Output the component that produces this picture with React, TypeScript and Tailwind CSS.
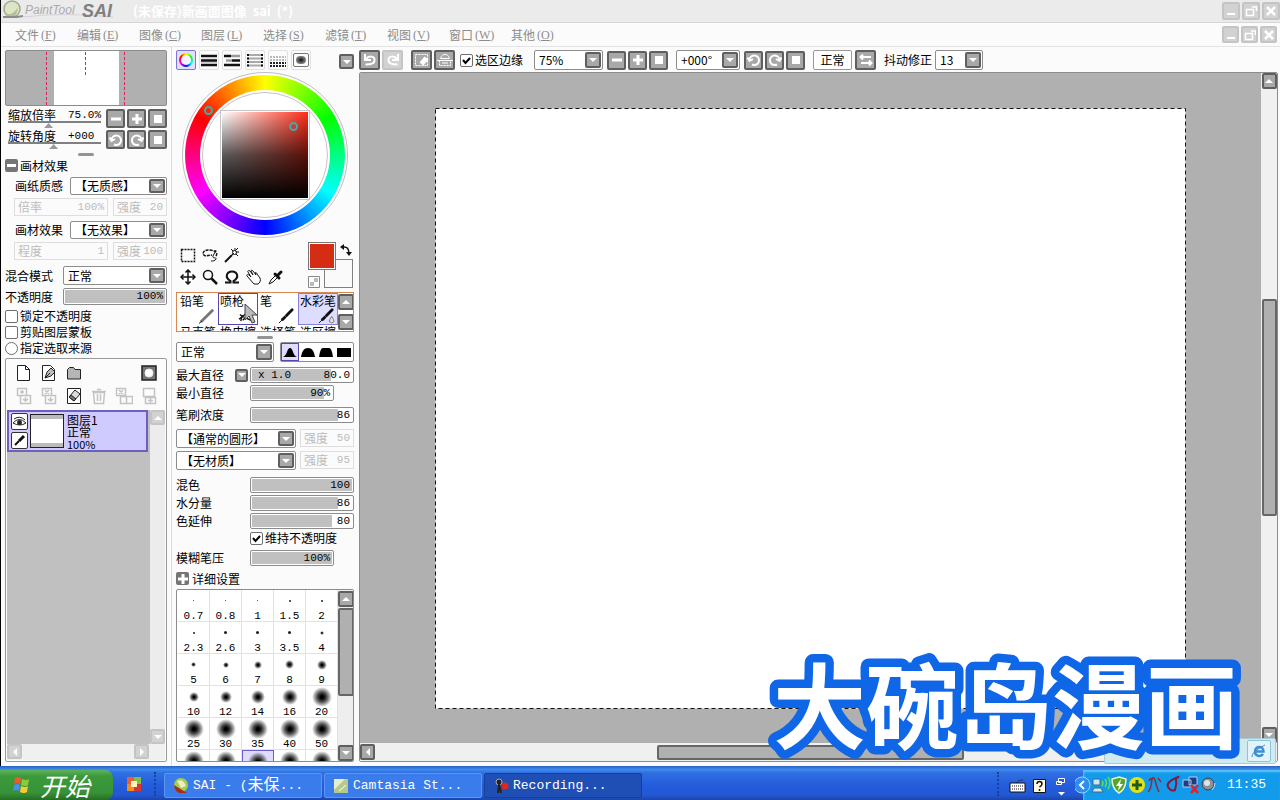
import { useState } from "react";
import type { ReactNode } from "react";
import clsx from "clsx";

const CJK = "font-['Noto_Sans_CJK_SC',sans-serif]";

const MENUS = [
  ["文件", "F"],
  ["编辑", "E"],
  ["图像", "C"],
  ["图层", "L"],
  ["选择", "S"],
  ["滤镜", "T"],
  ["视图", "V"],
  ["窗口", "W"],
  ["其他", "O"],
];

// label, diameter of the preview dot
const SIZES: [string, number][] = [
  ["0.7", 1], ["0.8", 1], ["1", 1], ["1.5", 2], ["2", 2],
  ["2.3", 2], ["2.6", 3], ["3", 3], ["3.5", 3], ["4", 4],
  ["5", 5], ["6", 6], ["7", 8], ["8", 9], ["9", 10],
  ["10", 10], ["12", 12], ["14", 14], ["16", 16], ["20", 20],
  ["25", 20], ["30", 20], ["35", 20], ["40", 20], ["50", 20],
  ["60", 20], ["70", 20], ["80", 20], ["100", 20], ["120", 20],
];

type IconName =
  | "minus" | "plus" | "square" | "ccw" | "cw" | "undo" | "redo"
  | "deselect" | "invert" | "swap" | "up" | "down" | "left" | "right"
  | "min" | "max" | "close";

function Glyph({ name }: { name: IconName }) {
  return (
    <svg viewBox="0 0 16 16" className="h-4 w-4 shrink-0" fill="none" stroke="#fff" strokeWidth="2">
      {name === "minus" && <path d="M3 8h10" strokeWidth="3" />}
      {name === "plus" && <path d="M3 8h10M8 3v10" strokeWidth="3" />}
      {name === "square" && <path d="M5 5h6v6H5z" fill="#fff" />}
      {name === "ccw" && <path d="M6 12.500a4.800 4.800 0 1 0-2.500-5M1.500 5.500l2 3.500L7 7" />}
      {name === "cw" && <path d="M10 12.500a4.800 4.800 0 1 1 2.500-5M14.500 5.500l-2 3.500L9 7" />}
      {name === "undo" && <path d="M3 2v6h6M3.500 7.500C7 3 13 4 12.500 8.500c0 3-2.500 4-9 4" />}
      {name === "redo" && <path d="M13 2v6H7M12.500 7.500C9 3 3 4 3.500 8.500c0 3 2.500 4 9 4" />}
      {name === "deselect" && (
        <>
          <path d="M1.500 2.500h12v11h-12z" strokeWidth="1" strokeDasharray="2 1" />
          <path d="M5.500 10.500l5-6 4 3-5 6z" fill="#fff" strokeWidth="0" />
        </>
      )}
      {name === "invert" && (
        <>
          <path d="M2.500 8.500h11v5h-11z" strokeWidth="1" strokeDasharray="2 1" />
          <path d="M3.500 6.500C5 1 11 1 12.500 6.500zM0 8.500h16M5 11h6" strokeWidth="1" />
        </>
      )}
      {name === "swap" && <path d="M2 5h11M3 11h11M5 2.500L2.500 5 5 7.500M11 8.500l2.500 2.500-2.500 2.500" />}
      {name === "up" && <path d="M4 10l4-4 4 4z" fill="#fff" strokeWidth="0" />}
      {name === "down" && <path d="M4 6l4 4 4-4z" fill="#fff" strokeWidth="0" />}
      {name === "left" && <path d="M10 4L6 8l4 4z" fill="#fff" strokeWidth="0" />}
      {name === "right" && <path d="M6 4l4 4-4 4z" fill="#fff" strokeWidth="0" />}
      {name === "min" && <path d="M4 11h8" />}
      {name === "max" && <path d="M3.500 6.500h7v6h-7zM9 4h4.500v4" strokeWidth="1.500" />}
      {name === "close" && <path d="M4 4l8 8M12 4l-8 8" strokeWidth="2.500" />}
    </svg>
  );
}

function Btn({ name, label, className, faded }: { name: IconName; label: string; className?: string; faded?: boolean }) {
  return (
    <button
      type="button"
      aria-label={label}
      className={clsx(
        "flex shrink-0 items-center justify-center overflow-hidden rounded-xs border-2",
        faded ? "border-[#c4c4c4] bg-[#d2d2d2]" : "border-[#5f5f5f] bg-[#a8a8a8]",
        className ?? "h-[19px] w-[19px]"
      )}
    >
      <Glyph name={name} />
    </button>
  );
}

function Drop({ label, value, className }: { label: string; value: string; className: string }) {
  return (
    <div className={clsx("relative shrink-0 rounded-xs border border-[#8c8c8c] bg-white", className)}>
      <select aria-label={label} className="h-full w-full appearance-none bg-transparent pl-1 leading-4 outline-none">
        <option>{value}</option>
      </select>
      <span className="pointer-events-none absolute inset-y-px right-px flex w-4 items-center justify-center overflow-hidden rounded-xs border-2 border-[#5f5f5f] bg-[#a8a8a8]">
        <Glyph name="down" />
      </span>
    </div>
  );
}

function Bar({ label, value, fill, className, prefix }: { label: string; value: string; fill: number; className: string; prefix?: string }) {
  const [pos, setPos] = useState(fill);
  return (
    <div className={clsx("relative shrink-0 rounded-xs border border-[#8c8c8c] bg-white p-px", className)}>
      <input
        type="range"
        aria-label={label}
        value={pos}
        onChange={(e) => setPos(Number(e.target.value))}
        className="block h-full w-full appearance-none [&::-webkit-slider-thumb]:opacity-0"
        style={{ background: `linear-gradient(to right, #c0c0c0 ${pos}%, #fff ${pos}%)` }}
      />
      <span className="pointer-events-none absolute inset-0 flex items-center justify-between px-[3px] font-['Liberation_Mono',monospace] text-[11px]">
        <span className="pl-1 whitespace-pre">{prefix}</span>
        <span>{value}</span>
      </span>
    </div>
  );
}

function Off({ label, value, className }: { label: string; value: string; className: string }) {
  return (
    <div className={clsx("flex h-[18px] shrink-0 items-center justify-between border border-[#dedede] px-[3px] text-[#bcbcbc]", className)}>
      <span>{label}</span>
      <span className="font-['Liberation_Mono',monospace] text-[11px]">{value}</span>
    </div>
  );
}

function Grip() {
  return (
    <div className="mt-0.5 flex h-[7px] items-center justify-center">
      <span className="h-[3px] w-4 rounded-xs bg-[#949494]" />
    </div>
  );
}

function Tick({ label, checked, type = "checkbox" }: { label: string; checked?: boolean; type?: "checkbox" | "radio" }) {
  const [on, setOn] = useState(!!checked);
  return (
    <label className="flex h-4 items-center gap-0.5">
      <span className="relative flex h-[13px] w-[13px]">
        <input
          type={type}
          checked={on}
          onChange={() => setOn(!on)}
          className={clsx("h-[13px] w-[13px] appearance-none border border-[#6f6f6f] bg-white", type === "radio" ? "rounded-full" : "rounded-xs")}
        />
        {on && (
          <svg viewBox="0 0 13 13" className="pointer-events-none absolute inset-0" fill="none" stroke="#000" strokeWidth="2">
            <path d="M3 6l2.500 3L10 4" />
          </svg>
        )}
      </span>
      {label}
    </label>
  );
}

function NavSlider({ label, value, pos }: { label: string; value: string; pos: number }) {
  return (
    <label className="flex h-[19px] w-[93px] flex-col">
      <span className="flex h-3 items-center justify-between leading-3">
        <span>{label}</span>
        <span className="font-['Liberation_Mono',monospace] text-[11px] whitespace-pre">{value}</span>
      </span>
      <input
        type="range"
        defaultValue={pos}
        className="block h-[7px] w-full appearance-none border-t-2 border-[#808080] [&::-webkit-slider-thumb]:h-[5px] [&::-webkit-slider-thumb]:w-[9px] [&::-webkit-slider-thumb]:appearance-none [&::-webkit-slider-thumb]:bg-[#9a9a9a] [&::-webkit-slider-thumb]:[clip-path:polygon(50%_0,100%_100%,0_100%)]"
      />
    </label>
  );
}

function TitleBar() {
  return (
    <header className="flex h-[23px] items-center border-b border-[#d6d6d6] bg-[#ebebec]">
      <svg viewBox="0 0 128 22" className="h-[22px] w-32 shrink-0">
        <circle cx="11" cy="9" r="8" fill="#dce5c4" stroke="#a3a88f" strokeWidth="1.500" />
        <path d="M2 11q8 8 15-4-1 11-9 11z" fill="#b3bd96" />
        <path d="M2 17h14l6-1" stroke="#8c8c8c" strokeWidth="2" fill="none" />
        <path d="M22 17q40-5 90 0" stroke="#d9cfe0" fill="none" />
        <text x="24" y="14" fontSize="12" fontStyle="italic" fill="#aaa" fontFamily="Liberation Sans">PaintTool</text>
        <text x="81" y="17" fontSize="18" fontWeight="bold" fontStyle="italic" fill="#808080" fontFamily="Liberation Sans">SAI</text>
      </svg>
      <h1 className="flex-1 pl-1 text-[13px] font-bold whitespace-pre text-white">(未保存)新画面图像  sai  (*)</h1>
      <div className="flex gap-0.5">
        <Btn faded name="min" label="最小化" className="h-[18px] w-[18px]" />
        <Btn faded name="max" label="还原" className="h-[18px] w-[18px]" />
        <Btn faded name="close" label="关闭" className="h-[18px] w-[18px]" />
      </div>
    </header>
  );
}

function MenuBar() {
  return (
    <nav className="flex h-6 items-center border-b border-[#e4e4e4] bg-[#fbfbfb] pl-3.5 text-[#8c8c8c]">
      {MENUS.map(([name, key]) => (
        <button key={key} type="button" className="flex w-[62px] items-center gap-0.5">
          {name}
          <span className="font-['Liberation_Serif',serif]">
            (<u>{key}</u>)
          </span>
        </button>
      ))}
      <div className="ml-auto flex gap-0.5 pr-[3px]">
        <Btn faded name="min" label="最小化图像" className="h-[17px] w-[17px]" />
        <Btn faded name="max" label="还原图像" className="h-[17px] w-[17px]" />
        <Btn faded name="close" label="关闭图像" className="h-[17px] w-[17px]" />
      </div>
    </nav>
  );
}

function LayerIcon({ label, dim, children }: { label: string; dim?: boolean; children: ReactNode }) {
  return (
    <button type="button" aria-label={label} className={clsx("h-[18px] w-[18px]", dim && "opacity-25")}>
      <svg viewBox="0 0 18 18" fill="#fff" stroke="#222">
        {children}
      </svg>
    </button>
  );
}

function LayerPanel() {
  return (
    <section className="mt-0.5 flex min-h-0 flex-1 flex-col rounded-xs border border-[#999] p-px">
      <div className="mt-1 grid h-[46px] grid-cols-6 content-start justify-items-center gap-y-[5px] px-1">
        <LayerIcon label="新建图层">
          <path d="M2.500 1.500h8l4 4v11h-12zM10.500 1.500v4h4" />
        </LayerIcon>
        <LayerIcon label="新建钢笔图层">
          <path d="M2.500 1.500h8l4 4v11h-12z" />
          <path d="M5 14l2-6 4-4 4 4-4 4zM5 14l5-5" fill="#bbb" />
        </LayerIcon>
        <LayerIcon label="新建图层组">
          <path d="M2.500 5.500l2-2h4l1.500 2h5.500v9.500h-13z" fill="#b5b5b5" />
        </LayerIcon>
        <span />
        <span />
        <LayerIcon label="图层蒙版">
          <path d="M2 2h14v14H2z" fill="#777" strokeWidth="1.500" />
          <circle cx="9" cy="9" r="4" stroke="#eee" />
        </LayerIcon>
        <LayerIcon label="向下转写" dim>
          <path d="M2.500 1.500h9v7h-9zM5.500 8.500h10v8h-10zM7 3v4M5 5h4M10.500 10v4M8 12l2.500 2 2.500-2" strokeWidth="1.500" />
        </LayerIcon>
        <LayerIcon label="向下合并" dim>
          <path d="M2.500 1.500h9v7h-9zM5.500 8.500h10v8h-10zM5 3l4 4M9 3L5 7M10.500 10v4M8 12l2.500 2 2.500-2" strokeWidth="1.500" />
        </LayerIcon>
        <LayerIcon label="清除图层">
          <path d="M2.500 1.500h13v15h-13z" />
          <path d="M4 10l6-7 5 4-6 7z" fill="#ddd" />
          <path d="M6 8l5 4-2 2-5-4z" fill="#777" />
        </LayerIcon>
        <LayerIcon label="删除图层" dim>
          <path d="M3.500 5.500h11l-1 11h-9zM2 4.500h14M7 2.500h4M7.500 7v7M10.500 7v7" strokeWidth="1.500" />
        </LayerIcon>
        <LayerIcon label="应用蒙版" dim>
          <path d="M1.500 1.500h9v7h-9zM5.500 9.500h6v7h-6zM11.500 9.500h6v7h-6zM4 3l4 4M8 3L4 7" strokeWidth="1.500" />
        </LayerIcon>
        <LayerIcon label="选取图层" dim>
          <path d="M3.500 1.500h11v8h-11zM5.500 10.500h10v6h-10zM10.500 11v5M8 13.500h5" strokeWidth="1.500" />
        </LayerIcon>
      </div>
      <div className="flex min-h-0 flex-1 bg-[#c0c0c0]">
        <div className="flex-1">
          <div className="flex h-[42px] items-center gap-0.5 border-2 border-[#6c5fc0] bg-[#cfcbff] pl-0.5">
            <div className="flex flex-col gap-0.5">
              <button type="button" aria-label="显示图层" className="h-[17px] w-[17px] rounded-xs border border-[#333] bg-white">
                <svg viewBox="0 0 15 15" fill="none" stroke="#222">
                  <path d="M1 9q6-7 13 0-6 4-13 0M2 5q6-4 11 1" />
                  <circle cx="7.500" cy="8.500" r="2" fill="#222" />
                </svg>
              </button>
              <button type="button" aria-label="编辑图层" className="h-[17px] w-[17px] rounded-xs border border-[#333] bg-white">
                <svg viewBox="0 0 15 15" stroke="#111">
                  <path d="M3 12l4-4" strokeWidth="2" />
                  <path d="M7 8l5-5" strokeWidth="3" />
                </svg>
              </button>
            </div>
            <div className="h-[34px] w-[34px] border border-[#222] bg-[linear-gradient(#bbb_4px,#fff_4px_28px,#bbb_28px)]" />
            <div className="pl-px">
              <p className="leading-[13px]">图层1</p>
              <p className="leading-3">正常</p>
              <p className="text-[11px] leading-3">100%</p>
            </div>
          </div>
        </div>
        <div className="ml-0.5 flex w-[15px] flex-col justify-between bg-[#ececec]">
          <Btn faded name="up" label="图层上滚" className="h-[15px] w-[15px]" />
          <Btn faded name="down" label="图层下滚" className="h-[15px] w-[15px]" />
        </div>
      </div>
      <div className="flex h-4 justify-between bg-[#f0f0f0] pr-4">
        <Btn faded name="left" label="图层左滚" className="h-[15px] w-[15px]" />
        <Btn faded name="right" label="图层右滚" className="h-[15px] w-[15px]" />
      </div>
    </section>
  );
}

function LeftPanel() {
  return (
    <aside className="flex w-[171px] shrink-0 flex-col border-r border-[#dcdcdc] pt-[3px] pr-1 pb-1 pl-1">
      <div className="relative flex h-14 justify-center rounded-xs border border-[#8c8c8c] bg-[#b0b0b0]">
        <div className="h-full w-[65px] bg-white" />
        <svg viewBox="0 0 160 54" className="absolute inset-0" fill="none" stroke="#e0205c" strokeDasharray="3 2">
          <path d="M40.500 1v53M118.500 1v53M79.500 1v25" />
        </svg>
      </div>
      <div className="mt-[3px] flex justify-between pl-[3px]">
        <NavSlider label="缩放倍率" value="75.0%" pos={43} />
        <div className="flex gap-0.5">
          <Btn name="minus" label="缩小视图" />
          <Btn name="plus" label="放大视图" />
          <Btn name="square" label="重置缩放" />
        </div>
      </div>
      <div className="mt-0.5 flex justify-between pl-[3px]">
        <NavSlider label="旋转角度" value="+000 " pos={49} />
        <div className="flex gap-0.5">
          <Btn name="ccw" label="视图左转" />
          <Btn name="cw" label="视图右转" />
          <Btn name="square" label="重置角度" />
        </div>
      </div>
      <Grip />
      <div className="flex h-[15px] items-center gap-0.5">
        <button type="button" aria-label="收起" className="flex h-[13px] w-[13px] items-center justify-center rounded-xs bg-[#757575]">
          <span className="h-[3px] w-[9px] bg-white" />
        </button>
        画材效果
      </div>
      <div className="mt-1 flex items-center justify-between pl-2.5">
        画纸质感
        <Drop label="画纸质感" value="【无质感】" className="h-[18px] w-[97px]" />
      </div>
      <div className="mt-[3px] flex justify-between pl-[9px]">
        <Off label="倍率" value="100%" className="w-[94px]" />
        <Off label="强度" value="20" className="w-[54px]" />
      </div>
      <div className="mt-[5px] flex items-center justify-between pl-2.5">
        画材效果
        <Drop label="画材效果" value="【无效果】" className="h-[18px] w-[97px]" />
      </div>
      <div className="mt-[3px] flex justify-between pl-[9px]">
        <Off label="程度" value="1" className="w-[94px]" />
        <Off label="强度" value="100" className="w-[54px]" />
      </div>
      <div className="mt-1.5 flex items-center justify-between">
        混合模式
        <Drop label="混合模式" value="正常" className="h-[19px] w-[104px]" />
      </div>
      <div className="mt-[3px] flex items-center justify-between">
        不透明度
        <Bar label="不透明度" value="100%" fill={100} className="h-[17px] w-[104px]" />
      </div>
      <div className="mt-[3px]">
        <Tick label="锁定不透明度" />
        <Tick label="剪贴图层蒙板" />
        <Tick label="指定选取来源" type="radio" />
      </div>
      <LayerPanel />
    </aside>
  );
}

function ColorTabs() {
  const box = "flex h-5 w-5 items-center justify-center rounded-xs border border-[#e0e0e0] p-px";
  return (
    <div className="flex h-5 items-start gap-[3px]">
      <button type="button" aria-label="色轮" className="flex h-5 w-5 items-center justify-center rounded-xs border border-[#7a74dd] bg-[#e2e0ff]">
        <span className="flex h-3.5 w-3.5 items-center justify-center rounded-full bg-[conic-gradient(#ff0,#0f0,#0ff,#00f,#f0f,#f00,#ff0)]">
          <span className="h-2.5 w-2.5 rounded-full bg-[#f4f3ff]" />
        </span>
      </button>
      <button type="button" aria-label="RGB滑块" className={box}>
        <svg viewBox="0 0 16 16" strokeWidth="2.500">
          <path d="M0 4h16M0 8.500h16M0 13h16" stroke="#111" />
          <path d="M0 6h16M0 10.500h16" stroke="#ccc" strokeWidth="1" />
        </svg>
      </button>
      <button type="button" aria-label="HSV滑块" className={box}>
        <svg viewBox="0 0 16 16" strokeWidth="2.500">
          <path d="M0 4h7M8 8.500h8M0 13h16" stroke="#111" />
          <path d="M7 4h9M2 8.500h6" stroke="#999" />
        </svg>
      </button>
      <button type="button" aria-label="中间色条" className={box}>
        <svg viewBox="0 0 16 16" strokeWidth="2">
          <path d="M0 3h16M0 6.500h16M0 10h16M0 13.500h16" stroke="#aaa" />
          <path d="M0 3h2M14 3h2M0 6.500h2M14 6.500h2M0 10h2M14 10h2M0 13.500h2M14 13.500h2" stroke="#111" />
        </svg>
      </button>
      <button type="button" aria-label="自定义色板" className={box}>
        <svg viewBox="0 0 16 16" strokeWidth="2" strokeDasharray="2 1">
          <path d="M0 5h16M0 8h16" stroke="#bbb" />
          <path d="M0 11h16M0 14h16" stroke="#222" />
        </svg>
      </button>
      <button type="button" aria-label="调色盘" className={box}>
        <span className="flex h-3.5 w-4 shrink-0 items-center justify-center rounded-xs border border-[#777]">
          <span className="h-2 w-2.5 rounded-full bg-[radial-gradient(#111,#bbb)]" />
        </span>
      </button>
      <Btn name="down" label="色彩选项" className="mt-1 ml-auto h-[15px] w-[15px]" />
    </div>
  );
}

function ColorWheel() {
  return (
    <div className="relative mx-auto mt-0.5 flex h-[166px] w-[166px] items-center justify-center rounded-full border border-[#c2bcc2] bg-white">
      <div className="flex h-40 w-40 items-center justify-center rounded-full bg-[conic-gradient(#ff0,#0f0,#0ff,#00f,#f0f,#f00,#ff0)]">
        <div className="flex h-[130px] w-[130px] items-center justify-center rounded-full bg-white">
          <div className="flex h-[126px] w-[126px] items-center justify-center rounded-full border border-[#c8c2c8]">
            <div className="h-[90px] w-[90px] shrink-0 border border-[#c8c2c8] bg-white p-px">
              <div className="h-full w-full bg-[linear-gradient(to_top,#000,#000000a6_50%,transparent),linear-gradient(to_right,#fff,#ff2d18)]" />
            </div>
          </div>
        </div>
      </div>
      <span className="absolute top-[33px] left-[21px] h-[9px] w-[9px] rounded-full border-2 border-[#3fa9ab]" />
      <span className="absolute top-[49px] left-[106px] h-[9px] w-[9px] rounded-full border-2 border-[#3fa9ab]" />
    </div>
  );
}

function Tool({ label, children }: { label: string; children: ReactNode }) {
  return (
    <button type="button" aria-label={label} className="h-[22px] w-[22px] p-[3px]">
      <svg viewBox="0 0 16 16" fill="none" stroke="#111">
        {children}
      </svg>
    </button>
  );
}

function ToolBox() {
  return (
    <div className="mt-1.5 flex justify-between">
      <div className="grid h-11 grid-cols-5 pl-px">
        <Tool label="矩形选择">
          <path d="M1.500 2.500h13v12h-13z" strokeWidth="1.500" strokeDasharray="2 1" />
        </Tool>
        <Tool label="套索">
          <path d="M14 9c3-5-4-6-8-6-5 0-7 5-2 6l6-1" strokeWidth="1.500" strokeDasharray="3 1" />
          <path d="M14 3l-3 6c-1 3 4 1 3 3s-3 2-5 2" />
        </Tool>
        <Tool label="魔棒">
          <path d="M1 15l7-7" strokeWidth="2" />
          <path d="M8 8l2-2M11 1v3M15 5h-3M7 2l2 2M14 9l-2-2M14 1l-2 2" />
          <circle cx="10.500" cy="5.500" r="2" />
        </Tool>
        <span />
        <span />
        <Tool label="移动">
          <path d="M8 1v14M1 8h14" strokeWidth="1.500" />
          <path d="M5.500 3.500L8 1l2.500 2.500M5.500 12.500L8 15l2.500-2.500M3.500 5.500L1 8l2.500 2.500M12.500 5.500L15 8l-2.500 2.500" strokeWidth="1.500" />
        </Tool>
        <Tool label="缩放">
          <circle cx="6" cy="6" r="4.500" strokeWidth="1.500" />
          <path d="M9.500 9.500L15 15" strokeWidth="2.500" />
        </Tool>
        <Tool label="旋转">
          <path d="M1 13.500h5.500v-1.500C0 8 3 2.500 8 2.500s8 5.500 1.500 9.500v1.500H15" strokeWidth="2" />
        </Tool>
        <Tool label="抓手">
          <path d="M8 15L1 7c-1-1 1-2 2-1l2 2-3-5c-1-1 1-2 2-1l3 4-2-4c0-1 1-1 2 0l3 4-1-2c1-1 2 0 2 1l3 4c1 2 0 5-2 6z" fill="#fff" />
        </Tool>
        <Tool label="吸管">
          <path d="M1 15l2-4 5-5 2 2-5 5z" fill="#fff" />
          <path d="M7 5l4 4M9 7l4-4" strokeWidth="3" strokeLinecap="round" />
        </Tool>
      </div>
      <div className="relative -mt-0.5 h-[46px] w-[46px]">
        <button type="button" aria-label="背景色" className="absolute right-px bottom-0 h-[29px] w-[29px] border border-[#808080] bg-[#fafafa]" />
        <button type="button" aria-label="前景色" className="absolute top-0 left-0 h-7 w-7 border border-[#777] bg-[#d62c14] outline outline-white -outline-offset-2" />
        <svg viewBox="0 0 12 12" className="absolute top-0.5 right-0.5 h-3 w-3" fill="none" stroke="#111" strokeWidth="1.500">
          <path d="M3 3q6-1 6 7" />
          <path d="M4 0v6L0 3zM6 8h6l-3 4z" fill="#111" strokeWidth="0" />
        </svg>
        <svg viewBox="0 0 12 12" className="absolute bottom-0 left-0 h-3 w-3">
          <path d="M.5.500h11v11H.5z" fill="#fff" stroke="#888" />
          <path d="M2 6h4v4H2zM6 2h4v4H6z" fill="#bbb" />
        </svg>
      </div>
    </div>
  );
}

const BRUSHES = ["铅笔", "喷枪", "笔", "水彩笔"];
const MORE_BRUSHES = ["马克笔", "橡皮擦", "选择笔", "选区擦"];

function BrushList() {
  return (
    <div className="relative mt-1 flex h-10 justify-between overflow-hidden border border-[#d98752] bg-white pr-px">
      <div className="grid grid-cols-[repeat(4,40px)] grid-rows-[32px_20px] pl-px">
        {BRUSHES.map((name, i) => (
          <button
            key={name}
            type="button"
            className={clsx(
              "relative flex items-start border px-px text-left leading-[14px] whitespace-nowrap",
              i === 1 && "border-[#5646b0]",
              i === 3 && "border-[#8880dd] bg-[#dedcff]",
              i % 2 === 0 && "border-transparent"
            )}
          >
            {name}
            <svg viewBox="0 0 18 18" className="absolute right-0.5 bottom-0 h-[17px] w-[17px]" fill="none" stroke="#111">
              {i === 0 && <path d="M3 16L16 3" strokeWidth="3" stroke="#777" />}
              {i === 0 && <path d="M1 17.500l3-2.500" />}
              {i === 1 && <path d="M1 13l10-8M2 8l4 3M5 14l5-5M9 12l5 2M3 15l1-5" strokeWidth="1.500" />}
              {i >= 2 && <path d="M1 17l4-4" />}
              {i >= 2 && <path d="M4 14l4-4" strokeWidth="3" />}
              {i >= 2 && <path d="M9 9l6-6" strokeWidth="3" strokeLinecap="round" />}
              {i === 3 && <path d="M14.500 10q-3 4-2.500 5.500 2.500 3 5 0 0-2-2.500-5.500z" fill="#ddd" stroke="#777" />}
            </svg>
          </button>
        ))}
        {MORE_BRUSHES.map((name) => (
          <button key={name} type="button" className="flex px-0.5 leading-[14px] whitespace-nowrap">
            {name}
          </button>
        ))}
      </div>
      <div className="flex flex-col justify-between py-px">
        <Btn name="up" label="笔刷上滚" className="h-4 w-4" />
        <Btn name="down" label="笔刷下滚" className="h-4 w-4" />
      </div>
      {/* mouse pointer */}
      <svg viewBox="0 0 14 22" className="pointer-events-none absolute top-2.5 left-[67px] h-[22px] w-3.5" fill="#bbb" stroke="#444">
        <path d="M1 1v16l4-4 3 7 3-1-3-7h5z" />
      </svg>
    </div>
  );
}

function EdgeShapes() {
  const paths = ["M1 13c4-1 4-9 7-9s3 8 7 9z", "M1 13c1-6 3-9 7-9s6 3 7 9z", "M1 13c1-6 2-9 4-9h6c2 0 3 3 4 9z", "M1 4h14v9H1z"];
  return (
    <div className="flex h-5 w-[74px] items-center rounded-xs border border-[#8c8c8c] bg-white">
      {paths.map((d, i) => (
        <button key={d} type="button" aria-label={`笔尖形状${i + 1}`} className={clsx("h-[18px] w-[18px] border", i === 0 ? "border-[#5646b0] bg-[#dedcff]" : "border-transparent")}>
          <svg viewBox="0 0 16 16" fill="#000">
            <path d={d} />
          </svg>
        </button>
      ))}
    </div>
  );
}

function Setting({ label, value, fill, short, prefix, className }: { label: string; value: string; fill: number; short?: boolean; prefix?: string; className: string }) {
  return (
    <div className={clsx("flex h-4 items-center", className)}>
      <span className="w-[59px]">{label}</span>
      <span className="w-[15px]">{prefix && <Btn name="down" label="直径倍数" className="h-[13px] w-[13px]" />}</span>
      <Bar label={label} value={value} fill={fill} prefix={prefix} className={short ? "h-4 w-[84px]" : "h-4 w-[104px]"} />
    </div>
  );
}

function SizeGrid() {
  return (
    <div className="mt-[3px] flex min-h-0 flex-1 justify-between overflow-hidden rounded-xs border border-[#8c8c8c] bg-white">
      <div className="grid auto-rows-[32px] grid-cols-[repeat(5,32px)] pl-px">
        {SIZES.map(([label, d]) => (
          <button
            key={label}
            type="button"
            className={clsx(
              "flex flex-col items-center font-['Liberation_Mono',monospace] text-[11px] leading-[10px]",
              label === "80" ? "border border-[#6c5fd0] bg-[#dedcff]" : "border-r border-b border-[#e2e2e2]"
            )}
          >
            <span className="flex h-[21px] shrink-0 items-center">
              <span
                className="rounded-full"
                style={{
                  width: d,
                  height: d,
                  background: d > 3 ? "radial-gradient(closest-side, #000 15%, #555 50%, transparent)" : "#222",
                }}
              />
            </span>
            {label}
          </button>
        ))}
      </div>
      <div className="flex w-4 flex-col bg-[#eee] pt-px">
        <Btn name="up" label="尺寸上滚" className="h-4 w-4" />
        <div className="mt-px h-[88px] rounded-xs border-2 border-[#666] bg-[#b0b0b0]" />
        <Btn name="down" label="尺寸下滚" className="mt-auto h-4 w-4" />
      </div>
    </div>
  );
}

function ToolPanel() {
  return (
    <aside className="flex w-[187px] shrink-0 flex-col pt-[3px] pr-[5px] pb-1 pl-1">
      <ColorTabs />
      <ColorWheel />
      <ToolBox />
      <BrushList />
      <Grip />
      <div className="mt-px flex h-5 justify-between">
        <Drop label="笔刷模式" value="正常" className="h-5 w-[98px]" />
        <EdgeShapes />
      </div>
      <Setting label="最大直径" value="80.0" fill={79} prefix="x 1.0" className="mt-[5px]" />
      <Setting label="最小直径" value="90%" fill={90} short className="mt-0.5" />
      <Setting label="笔刷浓度" value="86" fill={86} className="mt-1.5" />
      <div className="mt-1.5 flex h-[19px] justify-between">
        <Drop label="笔刷形状" value="【通常的圆形】" className="h-[19px] w-[120px]" />
        <Off label="强度" value="50" className="w-[54px]" />
      </div>
      <div className="mt-[3px] flex h-[19px] justify-between">
        <Drop label="笔刷材质" value="【无材质】" className="h-[19px] w-[120px]" />
        <Off label="强度" value="95" className="w-[54px]" />
      </div>
      <Setting label="混色" value="100" fill={100} className="mt-[7px]" />
      <Setting label="水分量" value="86" fill={86} className="mt-0.5" />
      <Setting label="色延伸" value="80" fill={80} className="mt-0.5" />
      <div className="mt-px pl-[74px]">
        <Tick label="维持不透明度" checked />
      </div>
      <Setting label="模糊笔压" value="100%" fill={100} short className="mt-1" />
      <div className="mt-[5px] flex h-[15px] items-center gap-[3px]">
        <button type="button" aria-label="展开" className="flex h-[13px] w-[13px] items-center justify-center rounded-xs bg-[#757575]">
          <Glyph name="plus" />
        </button>
        详细设置
      </div>
      <SizeGrid />
    </aside>
  );
}

function ToolBar() {
  const wide = "h-5 w-[21px]";
  return (
    <div className="flex h-5 items-center gap-0.5">
      <Btn name="undo" label="撤销" className={wide} />
      <Btn faded name="redo" label="重做" className={wide} />
      <span className="w-1" />
      <Btn name="deselect" label="取消选择" className={wide} />
      <Btn name="invert" label="反选" className={wide} />
      <span className="w-px" />
      <Tick label="选区边缘" checked />
      <span className="w-[7px]" />
      <Drop label="显示倍率" value="75%" className="h-5 w-[69px]" />
      <div className="flex gap-0.5 px-0.5">
        <Btn name="minus" label="缩小" />
        <Btn name="plus" label="放大" />
        <Btn name="square" label="适合窗口" />
      </div>
      <Drop label="显示角度" value="+000°" className="ml-1 h-5 w-16" />
      <div className="flex gap-0.5 px-0.5">
        <Btn name="ccw" label="左转" />
        <Btn name="cw" label="右转" />
        <Btn name="square" label="复位角度" />
      </div>
      <button type="button" className="mr-px ml-1 h-5 w-[39px] rounded-xs border border-[#999] bg-white leading-4">
        正常
      </button>
      <Btn name="swap" label="水平翻转" className={wide} />
      <span className="pl-1.5">抖动修正</span>
      <Drop label="抖动修正" value="13" className="ml-px h-5 w-12" />
    </div>
  );
}

function Workspace() {
  return (
    <main className="flex min-w-0 flex-1 flex-col pt-[3px] pr-0.5 pb-1">
      <ToolBar />
      <div className="mt-0.5 flex min-h-0 flex-1 flex-col rounded-xs border border-[#8c8c8c]">
        <div className="flex min-h-0 flex-1">
          <div className="flex min-w-0 flex-1 items-center justify-center overflow-hidden bg-[#b0b0b0]">
            <svg viewBox="0 0 751 601" className="w-[751px] max-w-full">
              <path d="M.5.500h750v600H.5z" fill="#fff" stroke="#111" strokeDasharray="4 3" />
            </svg>
          </div>
          <div className="flex w-4 flex-col items-center bg-[#f0f0f0]">
            <Btn name="up" label="画布上滚" className="h-4 w-[15px]" />
            <div className="flex min-h-0 flex-1 flex-col">
              <div className="flex-[211]" />
              <div className="w-[15px] flex-[214] rounded-xs border-2 border-[#666] bg-[#b0b0b0]" />
              <div className="flex-[212]" />
            </div>
            <Btn name="down" label="画布下滚" className="h-4 w-[15px]" />
          </div>
        </div>
        <div className="flex h-[18px] items-center bg-[#f0f0f0] pr-4">
          <Btn name="left" label="画布左滚" className="h-4 w-[15px]" />
          <div className="flex-[283]" />
          <div className="h-[15px] flex-[303] rounded-xs border-2 border-[#666] bg-[#b0b0b0]" />
          <div className="flex-[283]" />
          <Btn name="right" label="画布右滚" className="h-4 w-[15px]" />
        </div>
      </div>
    </main>
  );
}

function Task({ icon, active, children }: { icon: ReactNode; active?: boolean; children: ReactNode }) {
  return (
    <button
      type="button"
      className={clsx(
        "flex h-[25px] w-[158px] items-center gap-1 rounded-xs border px-2 font-['Liberation_Mono','Noto_Sans_CJK_SC',monospace] text-[13px] whitespace-pre text-white",
        active ? "border-[#163f96] bg-[#1f4fb4]" : "border-[#5a97f5] bg-[#3b7cec]"
      )}
    >
      <svg viewBox="0 0 16 16" className="h-4 w-4 shrink-0">
        {icon}
      </svg>
      {children}
    </button>
  );
}

function TaskBar() {
  return (
    <footer className="flex h-[34px] shrink-0 items-end bg-[linear-gradient(#2a5fc0,#3f8cf0_10%,#2f6fe0_20%,#245bdb_60%,#2358d4_85%,#1b46a8)] text-white">
      <button type="button" className="flex h-[30px] w-[113px] items-center gap-2 rounded-r-lg bg-[linear-gradient(#5fb35c,#3b9a3b_20%,#389238_75%,#256e25)] pl-3 text-[25px] leading-7 italic">
        <svg viewBox="0 0 20 20" className="h-5 w-5">
          <path d="M3 3q3-2 6 0L8 9Q5 7 2 9z" fill="#f0592a" />
          <path d="M10 4q4 2 7 0l-1 6q-3 2-7 0z" fill="#8ccb3f" />
          <path d="M2 10q3-2 6 0l-1 6q-3-2-6 0z" fill="#4b8df0" />
          <path d="M9 11q4 2 7 0l-1 6q-3 2-7 0z" fill="#fcca2e" />
        </svg>
        开始
      </button>
      <svg viewBox="0 0 16 16" className="mb-2 ml-[13px] h-4 w-4">
        <path d="M1 1h7v7H1z" fill="#f25b2f" />
        <path d="M8 1h7v7H8z" fill="#7ac143" />
        <path d="M1 8h7v7H1z" fill="#f08a24" />
        <path d="M8 8h7v7H8z" fill="#d9342b" />
        <path d="M5 5h6v6H5z" fill="#fff3c4" />
      </svg>
      <span className="mb-1 ml-3 h-6 border-l-2 border-dotted border-[#173f9c]" />
      <div className="mb-0.5 ml-2 flex gap-0.5">
        <Task
          icon={
            <>
              <circle cx="8" cy="7" r="7" fill="#9fcf4a" />
              <path d="M4 3q6-3 9 5l-5 2z" fill="#f4e9c8" />
              <path d="M1 7l13 8H6Q1 12 1 7z" fill="#a82d1c" />
            </>
          }
        >
          <span className="flex items-center">
            <span>SAI - (</span>
            <span className="text-base leading-5">未保</span>
            <span>...</span>
          </span>
        </Task>
        <Task
          icon={
            <>
              <path d="M1 1h14v14H1z" fill="#b7c98a" />
              <path d="M1 1h11L1 12z" fill="#e6eecb" />
              <path d="M6 13l7-6" stroke="#fff" />
            </>
          }
        >
          Camtasia St...
        </Task>
        <Task
          active
          icon={
            <>
              <circle cx="6" cy="4" r="3" fill="#222" stroke="#aaa" />
              <path d="M6 6l-1 9M6 6l2 9" stroke="#222" strokeWidth="2" />
              <circle cx="12" cy="8" r="3.500" fill="#e0251b" />
            </>
          }
        >
          Recording...
        </Task>
      </div>
      <span className="mb-1 ml-auto h-6 border-l-2 border-dotted border-[#173f9c]" />
      <svg viewBox="0 0 74 24" className="mb-0.5 ml-2.5 h-6 w-[74px]" fill="none">
        <path d="M1 9h15v9H1z" fill="#fff" stroke="#111" />
        <path d="M3 12h11M3 15h11M8 9q0-3 6-3" stroke="#111" strokeDasharray="1 1" />
        <path d="M24.500 5.500h12v13h-12z" fill="#fffbe0" stroke="#111" />
        <path d="M28 10q0-2.500 2.500-2.500T33 10q0 1.500-2.500 3M30.500 15v2" stroke="#111" strokeWidth="1.500" />
        <path d="M49.500 4.500h6v4h-6zM47.500 7.500h5v3h-5z" stroke="#fff" fill="#2359d5" />
        <path d="M49 18h7l-3.500 3.500z" fill="#fff" />
      </svg>
      <div className="flex h-[30px] items-center bg-[#129bea] pr-3.5 shadow-[inset_1px_2px_2px_#5cc6fa]">
        <svg viewBox="0 0 144 24" className="-ml-2 h-6 w-36" fill="none">
          <circle cx="7" cy="12" r="8" fill="#2c8ef0" stroke="#9bd2ff" />
          <path d="M9 8l-4 4 4 4" stroke="#fff" strokeWidth="2" />
          <path d="M18 6h7v6h-7zM19 15h7l2 4H17z" fill="#cfe3ee" stroke="#3b6a88" />
          <path d="M27 8q2 2 0 5M30 6q3 4 0 8M33 4q4 6 0 12" stroke="#5de04a" strokeWidth="1.500" />
          <path d="M44 4l7 2q0 10-7 14-7-4-7-14z" fill="#59a52c" stroke="#e6f6d4" strokeWidth="1.500" />
          <path d="M46 6l-5 7h3l-1 5 5-7h-3z" fill="#fff" />
          <circle cx="62" cy="12" r="8" fill="#e8e017" />
          <path d="M62 7v10M57 12h10" stroke="#1c5c1c" strokeWidth="3" />
          <path d="M73 19q3-2 4-13 1-3 3 1 2 8 4 12M76 5l-2 3M83 5l3 4" stroke="#8c2b3a" strokeWidth="1.500" />
          <path d="M101 5q-10 4-8 9 3 5 7 3 2-6 1-12zq2 0 3-2" stroke="#8c1538" strokeWidth="2" />
          <path d="M108 7h8v7h-8zM114 4h8v8h-8z" fill="#1d3c86" stroke="#b9cdec" />
          <path d="M116 12l7 8M123 12l-7 8" stroke="#e0202c" strokeWidth="2.500" />
          <circle cx="133" cy="11" r="6" fill="#8b9199" stroke="#3c4148" />
          <circle cx="132" cy="10" r="3" fill="#dfe3e6" />
          <path d="M137 17q3-3 3-7" stroke="#cde" />
        </svg>
        <time className="pl-2 font-['Liberation_Mono',monospace] text-[13px]">11:35</time>
      </div>
    </footer>
  );
}

export default function App() {
  return (
    <div className={clsx("relative flex h-screen flex-col overflow-hidden bg-[#fbfbfb] text-xs text-black", CJK)}>
      <div className="flex min-h-0 flex-1 flex-col border-l border-black">
        <TitleBar />
        <MenuBar />
        <div className="flex min-h-0 flex-1">
          <LeftPanel />
          <ToolPanel />
          <Workspace />
        </div>
      </div>
      <TaskBar />

      {/* language bar floating over the taskbar edge */}
      <div className="absolute right-1 bottom-9 flex h-[26px] w-[172px] items-center justify-end rounded-xs border border-[#a9cbd2] bg-[#cfeaf0] pr-1">
        <button type="button" aria-label="浏览器" className="flex h-[22px] w-6 items-center justify-center rounded-xs border border-[#8fc3d8] bg-[#e2f4fa]">
          <svg viewBox="0 0 16 16" className="h-4 w-4" fill="none" stroke="#3b8fd0" strokeWidth="2.500">
            <path d="M4 8.500h8.500C12.500 2.500 4 2.500 4 8.500c0 5 6 5.500 8 2.500" />
            <path d="M1 14Q0 9 14 2" strokeWidth="1" />
          </svg>
        </button>
      </div>
      <svg viewBox="0 0 480 112" className="pointer-events-none absolute right-[34px] bottom-[34px] h-28 w-[480px] overflow-visible">
        <text x="7" y="88" fontSize="93" fontWeight="bold" fontFamily="Noto Sans CJK SC, sans-serif" fill="#fff" stroke="#0f66e6" strokeWidth="17" strokeLinejoin="round" paintOrder="stroke">
          大碗岛漫画
        </text>
      </svg>
    </div>
  );
}
